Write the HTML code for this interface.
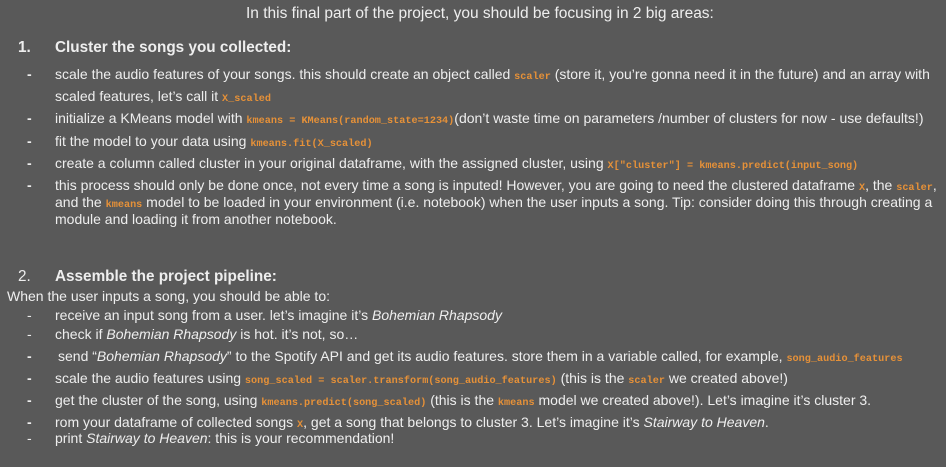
<!DOCTYPE html><html><head><style>
body{margin:0;width:946px;height:467px;background:#595959;font-family:"Liberation Sans",sans-serif;color:#eeeeee;position:relative;overflow:hidden}
.l{position:absolute;white-space:nowrap;font-size:14px;line-height:16px}
.d{position:absolute;left:27px;font-size:14px;line-height:16px;font-weight:bold}
.h{font-size:15.3px;font-weight:bold}
c{font-family:"Liberation Mono",monospace;color:#e69138;font-size:10.2px;font-weight:bold}
</style></head><body>
<div class="l" style="left:246px;top:6px;font-size:15.5px">In this final part of the project, you should be focusing in 2 big areas:</div>
<div class="l h" style="left:18px;top:40px">1.</div>
<div class="l h" style="left:55px;top:40px">Cluster the songs you collected:</div>
<div class="d" style="top:66px">-</div>
<div class="l" style="left:55px;top:66px">scale the audio features of your songs. this should create an object called <c>scaler</c> (store it, you’re gonna need it in the future) and an array with</div>
<div class="l" style="left:55px;top:88px">scaled features, let’s call it <c>X_scaled</c></div>
<div class="d" style="top:110px">-</div>
<div class="l" style="left:55px;top:110px">initialize a KMeans model with <c>kmeans = KMeans(random_state=1234)</c>(don’t waste time on parameters /number of clusters for now - use defaults!)</div>
<div class="d" style="top:133px">-</div>
<div class="l" style="left:55px;top:133px">fit the model to your data using <c>kmeans.fit(X_scaled)</c></div>
<div class="d" style="top:155px">-</div>
<div class="l" style="left:55px;top:155px">create a column called cluster in your original dataframe, with the assigned cluster, using <c>X["cluster"] = kmeans.predict(input_song)</c></div>
<div class="d" style="top:177px">-</div>
<div class="l" style="left:55px;top:177px">this process should only be done once, not every time a song is inputed! However, you are going to need the clustered dataframe <c>X</c>, the <c>scaler</c>,</div>
<div class="l" style="left:55px;top:194px">and the <c>kmeans</c> model to be loaded in your environment (i.e. notebook) when the user inputs a song. Tip: consider doing this through creating a</div>
<div class="l" style="left:55px;top:211px">module and loading it from another notebook.</div>
<div class="l h" style="left:18px;top:269px;font-weight:normal">2.</div>
<div class="l h" style="left:55px;top:269px">Assemble the project pipeline:</div>
<div class="l" style="left:7px;top:288px">When the user inputs a song, you should be able to:</div>
<div class="d" style="top:307px;font-weight:normal">-</div>
<div class="l" style="left:55px;top:307px">receive an input song from a user. let’s imagine it’s <i>Bohemian Rhapsody</i></div>
<div class="d" style="top:326px;font-weight:normal">-</div>
<div class="l" style="left:55px;top:326px">check if <i>Bohemian Rhapsody</i> is hot. it’s not, so…</div>
<div class="d" style="top:348px">-</div>
<div class="l" style="left:58px;top:348px">send “<i>Bohemian Rhapsody</i>” to the Spotify API and get its audio features. store them in a variable called, for example, <c>song_audio_features</c></div>
<div class="d" style="top:370px">-</div>
<div class="l" style="left:55px;top:370px">scale the audio features using <c>song_scaled = scaler.transform(song_audio_features)</c> (this is the <c>scaler</c> we created above!)</div>
<div class="d" style="top:392px">-</div>
<div class="l" style="left:55px;top:392px">get the cluster of the song, using <c>kmeans.predict(song_scaled)</c> (this is the <c>kmeans</c> model we created above!). Let’s imagine it’s cluster 3.</div>
<div class="d" style="top:414px">-</div>
<div class="l" style="left:55px;top:414px">rom your dataframe of collected songs <c>X</c>, get a song that belongs to cluster 3. Let’s imagine it’s <i>Stairway to Heaven</i>.</div>
<div class="d" style="top:430px;font-weight:normal">-</div>
<div class="l" style="left:55px;top:430px">print <i>Stairway to Heaven</i>: this is your recommendation!</div>
</body></html>
